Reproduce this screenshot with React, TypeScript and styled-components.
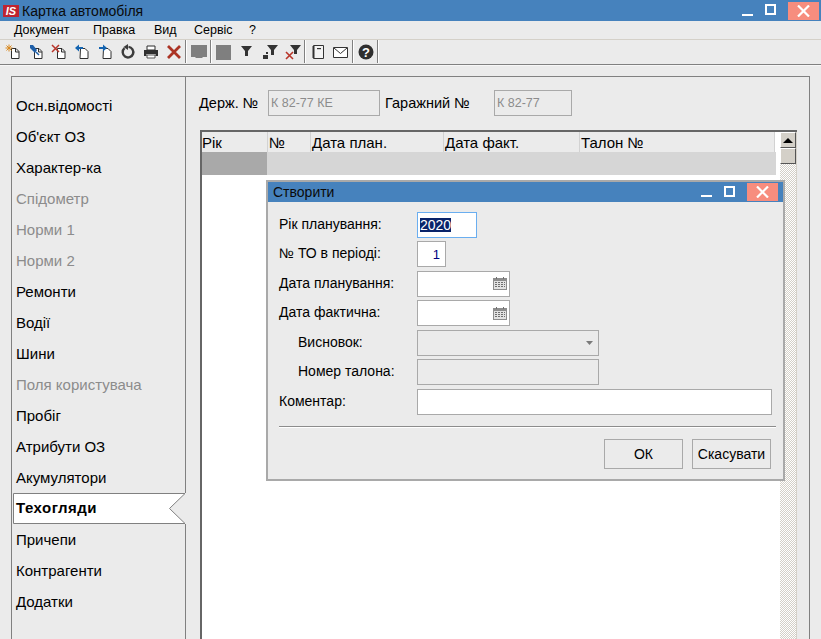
import React from "react";
import styled, { createGlobalStyle } from "styled-components";

const GlobalStyle = createGlobalStyle`
    html, body {
        margin: 0;
        padding: 0;
        background: #ebebeb;
    }
    * {
        box-sizing: border-box;
    }
`;

const menuItems = [
    { label: "Документ", width: 79 },
    { label: "Правка", width: 61 },
    { label: "Вид", width: 40 },
    { label: "Сервіс", width: 55 },
    { label: "?", width: 20 },
];

const sideItems = [
    { label: "Осн.відомості" },
    { label: "Об'єкт ОЗ" },
    { label: "Характер-ка" },
    { label: "Спідометр", off: true },
    { label: "Норми 1", off: true },
    { label: "Норми 2", off: true },
    { label: "Ремонти" },
    { label: "Водії" },
    { label: "Шини" },
    { label: "Поля користувача", off: true },
    { label: "Пробіг" },
    { label: "Атрибути ОЗ" },
    { label: "Акумулятори" },
    { label: "Техогляди", active: true },
    { label: "Причепи" },
    { label: "Контрагенти" },
    { label: "Додатки" },
];

const columns = [
    { label: "Рік", width: 66 },
    { label: "№", width: 43 },
    { label: "Дата план.", width: 133 },
    { label: "Дата факт.", width: 136 },
    { label: "Талон №", width: 195 },
];

const DocShape = () => <path d="M6.5 4.5h4.5l3 3v7h-7.5z M10.5 4.5v3.5h3.5" fill="#fff" stroke="#2f2f2f" />;

const toolIcons: Record<string, React.ReactNode> = {
    create: (
        <>
            <DocShape />
            <path d="M4 0.5v7M0.5 4h7M1.5 1.5l5 5M6.5 1.5l-5 5" stroke="#d98a22" strokeWidth="1" />
        </>
    ),
    pin: (
        <>
            <DocShape />
            <path d="M2 1l3 0 4 5 -2 3 -5 -5z" fill="#1f5fa8" />
            <path d="M8 8l3 3" stroke="#1f5fa8" strokeWidth="1.5" />
        </>
    ),
    remove: (
        <>
            <DocShape />
            <path d="M1 1l7 7M8 1l-7 7" stroke="#b8352a" strokeWidth="1.5" />
        </>
    ),
    back: (
        <>
            <path d="M6.5 4.5h4.5l3 3v7h-8z" fill="#fff" stroke="#2f2f2f" />
            <path d="M9 4H4" stroke="#1464b0" strokeWidth="2" />
            <path d="M5 0.5v7L1 4z" fill="#1464b0" />
        </>
    ),
    forward: (
        <>
            <path d="M6.5 4.5h4.5l3 3v7h-8z" fill="#fff" stroke="#2f2f2f" />
            <path d="M2 4h5" stroke="#1464b0" strokeWidth="2" />
            <path d="M6 0.5v7L10 4z" fill="#1464b0" />
        </>
    ),
    refresh: (
        <>
            <path d="M4.5 4.2a5.3 5.3 0 1 0 4 -1.3" fill="none" stroke="#3c3c3c" strokeWidth="2.4" />
            <path d="M8 0v6L3.5 3z" fill="#3c3c3c" />
        </>
    ),
    print: (
        <>
            <path d="M4 2h8v4H4z" fill="#fff" stroke="#2f2f2f" />
            <path d="M1 6h14v6h-2.5v-2h-9v2H1z" fill="#2f2f2f" />
            <path d="M4 11h8v3H4z" fill="#fff" stroke="#2f2f2f" strokeWidth="0.8" />
        </>
    ),
    close: <path d="M2 2l12 12M14 2L2 14" stroke="#ab3324" strokeWidth="2.8" />,
    monitor: <path d="M0 1h16v12h-4l-1 1H5l-1 -1H0z" fill="#7f7f7f" />,
    square: <path d="M0 1h15v15H0z" fill="#7f7f7f" />,
    filter: <path d="M2 2h11L9 7v5H6V7z" fill="#333" />,
    filterAdd: (
        <>
            <path d="M5 1h11l-4 5v5H9V6z" fill="#333" />
            <path d="M4 8h2v2H4zM1 11h5v4H1z" fill="#333" />
        </>
    ),
    filterOff: (
        <>
            <path d="M5 1h11l-4 5v4H9V6z" fill="#333" />
            <path d="M1 8l7 7M8 8l-7 7" stroke="#b8352a" strokeWidth="1.6" />
        </>
    ),
    notebook: (
        <>
            <path d="M3.5 1.5h10v13h-10z" fill="#f4f4f4" stroke="#333" />
            <path d="M2 3h3M2 5h3M2 7h3M2 9h3M2 11h3M2 13h3" stroke="#333" />
            <path d="M7 4h4v1.2H7z" fill="#333" />
        </>
    ),
    mail: (
        <>
            <path d="M0.5 3.5h14v10h-14z" fill="#fff" stroke="#333" />
            <path d="M1 4l6.5 5.5L14 4" fill="none" stroke="#333" />
        </>
    ),
    help: (
        <>
            <circle cx="8" cy="8" r="7.5" fill="#2f2f2f" />
            <text x="8" y="12.5" textAnchor="middle" fontSize="13" fontWeight="700" fontFamily="Liberation Sans, sans-serif" fill="#fff">?</text>
        </>
    ),
};

const toolbarGroups = [
    ["create", "pin", "remove", "back", "forward", "refresh", "print", "close"],
    ["monitor"],
    ["square", "filter", "filterAdd", "filterOff"],
    ["notebook", "mail"],
    ["help"],
];

const CalendarIcon = () => (
    <svg width="14" height="13" viewBox="0 0 14 13">
        <path d="M0 1h14v12H0z" fill="#8d8d8d" />
        <path d="M1 4h12v8H1z" fill="#e2e2e2" />
        <path d="M3 0h1v2H3zM10 0h1v2h-1zM2 5h2v1H2zM5 5h2v1H5zM8 5h2v1H8zM11 5h1v1h-1zM2 7h2v1H2zM5 7h2v1H5zM8 7h2v1H8zM11 7h1v1h-1zM2 9h2v1H2zM5 9h2v1H5zM8 9h2v1H8zM11 9h1v1h-1z" fill="#6f6f6f" />
    </svg>
);

const WindowControls = ({ gap }: { gap: number }) => (
    <Controls $gap={gap}>
        <MinimizeGlyph />
        <MaximizeGlyph />
        <CloseButton>
            <svg width="13" height="12" viewBox="0 0 13 12">
                <path d="M1 0.5l11 11M12 0.5l-11 11" stroke="#fff" strokeWidth="2.2" />
            </svg>
        </CloseButton>
    </Controls>
);

const App = () => {
    return (
        <Page>
            <GlobalStyle />
            <TitleBar>
                <Logo>IS</Logo>
                <TitleText>Картка автомобіля</TitleText>
                <WindowControls gap={2} />
            </TitleBar>

            <MenuBar>
                {menuItems.map(item => (
                    <MenuItem key={item.label} $width={item.width}>{item.label}</MenuItem>
                ))}
            </MenuBar>

            <ToolBar>
                {toolbarGroups.map((group, i) => (
                    <React.Fragment key={i}>
                        {group.map(name => (
                            <ToolButton key={name}>
                                <svg width="16" height="16" viewBox="0 0 16 16">{toolIcons[name]}</svg>
                            </ToolButton>
                        ))}
                        <ToolSeparator />
                    </React.Fragment>
                ))}
            </ToolBar>

            <Workspace>
                <Frame>
                    <SideBar>
                        {sideItems.map(item =>
                            item.active ? (
                                <ActiveTab key={item.label}>
                                    <TabShape width="173" height="31" viewBox="0 0 173 31">
                                        <rect x="155" y="0" width="18" height="31" fill="#ebebeb" />
                                        <path d="M0.5 0.5H172L156.5 15.5L172 30.5H0.5z" fill="#fff" stroke="#808080" />
                                    </TabShape>
                                    <ActiveLabel>{item.label}</ActiveLabel>
                                </ActiveTab>
                            ) : (
                                <SideItem key={item.label} $off={item.off}>{item.label}</SideItem>
                            )
                        )}
                    </SideBar>

                    <Content>
                        <FieldsRow>
                            <FieldLabel $width={69}>Держ. №</FieldLabel>
                            <ReadonlyField $width={112}>К 82-77 КЕ</ReadonlyField>
                            <FieldLabel $width={114} $indent={5}>Гаражний №</FieldLabel>
                            <ReadonlyField $width={78}>К 82-77</ReadonlyField>
                        </FieldsRow>

                        <TableBox>
                            <TableMain>
                                <HeaderRow>
                                    {columns.map(col => (
                                        <HeaderCell key={col.label} $width={col.width}>{col.label}</HeaderCell>
                                    ))}
                                </HeaderRow>
                                <DataRow>
                                    <CurrentCell />
                                </DataRow>
                            </TableMain>
                            <ScrollBar>
                                <ScrollButton>
                                    <svg width="10" height="5" viewBox="0 0 10 5">
                                        <path d="M5 0l5 5H0z" fill="#000" />
                                    </svg>
                                </ScrollButton>
                                <ScrollThumb />
                                <ScrollTrack />
                            </ScrollBar>
                        </TableBox>
                    </Content>
                </Frame>
            </Workspace>

            <Dialog>
                <DialogTitle>
                    <DialogTitleText>Створити</DialogTitleText>
                    <WindowControls gap={5} />
                </DialogTitle>
                <DialogBody>
                    <FormRow>
                        <FormLabel>Рік планування:</FormLabel>
                        <Input $width={60} $focus>
                            <Selected>2020</Selected>
                        </Input>
                    </FormRow>
                    <FormRow>
                        <FormLabel>№ ТО в періоді:</FormLabel>
                        <Input $width={29} $align="right">
                            <NumberValue>1</NumberValue>
                        </Input>
                    </FormRow>
                    <FormRow>
                        <FormLabel>Дата планування:</FormLabel>
                        <Input $width={93} $align="right"><CalendarIcon /></Input>
                    </FormRow>
                    <FormRow>
                        <FormLabel>Дата фактична:</FormLabel>
                        <Input $width={93} $align="right"><CalendarIcon /></Input>
                    </FormRow>
                    <FormRow>
                        <FormLabel $indent>Висновок:</FormLabel>
                        <Input $width={182} $align="right" $disabled>
                            <svg width="18" height="4" viewBox="0 0 18 4">
                                <path d="M8 0h7l-3.5 4z" fill="#7a7a7a" />
                            </svg>
                        </Input>
                    </FormRow>
                    <FormRow>
                        <FormLabel $indent>Номер талона:</FormLabel>
                        <Input $width={182} $disabled />
                    </FormRow>
                    <FormRow>
                        <FormLabel>Коментар:</FormLabel>
                        <Input $width={355} />
                    </FormRow>
                    <Divider />
                    <ButtonRow>
                        <DialogButton>ОК</DialogButton>
                        <DialogButton>Скасувати</DialogButton>
                    </ButtonRow>
                </DialogBody>
            </Dialog>
        </Page>
    );
};

const Page = styled.div`
    position: relative;
    width: 821px;
    height: 639px;
    overflow: hidden;
    display: flex;
    flex-direction: column;
    background: #ebebeb;
    color: #000;
    font-family: "Liberation Sans", Arial, sans-serif;
    font-size: 14px;
`;

const TitleBar = styled.div`
    height: 21px;
    flex: none;
    display: flex;
    align-items: center;
    background: #4682bd;
    padding-left: 3px;
`;

const Logo = styled.span`
    width: 16px;
    height: 12px;
    margin-top: 1px;
    background: #bf2430;
    color: #fff;
    font-size: 11px;
    line-height: 12px;
    font-weight: 700;
    font-style: italic;
    text-align: center;
`;

const TitleText = styled.span`
    flex: 1;
    margin-left: 3px;
    font-size: 14px;
    color: #0a0a0a;
`;

const Controls = styled.div<{ $gap: number }>`
    display: flex;
    align-items: center;
    gap: 12px;
    padding-right: ${props => props.$gap}px;
`;

const MinimizeGlyph = styled.span`
    width: 11px;
    height: 2px;
    margin-top: 8px;
    background: #fff;
`;

const MaximizeGlyph = styled.span`
    width: 11px;
    height: 11px;
    margin-top: -2px;
    border: 2px solid #fff;
`;

const CloseButton = styled.span`
    width: 31px;
    height: 18px;
    display: flex;
    align-items: center;
    justify-content: center;
    background: #f78d7e;
`;

const MenuBar = styled.div`
    height: 19px;
    flex: none;
    display: flex;
    align-items: center;
    padding-left: 14px;
    border-bottom: 1px solid #d4d0c8;
    font-size: 12.5px;
`;

const MenuItem = styled.span<{ $width: number }>`
    width: ${props => props.$width}px;
    flex: none;
`;

const ToolBar = styled.div`
    height: 25px;
    flex: none;
    display: flex;
    align-items: center;
    padding: 0 0 1px 1px;
    border-bottom: 1px solid #808080;
    box-shadow: 0 1px 0 #f7f7f7;
`;

const ToolButton = styled.span`
    width: 23px;
    height: 23px;
    flex: none;
    display: flex;
    align-items: center;
    justify-content: center;
`;

const ToolSeparator = styled.span`
    width: 2px;
    height: 23px;
    flex: none;
    border-left: 1px solid #808080;
    border-right: 1px solid #fff;
`;

const Workspace = styled.div`
    flex: 1;
    min-height: 0;
    display: flex;
    padding: 11px 11px 0;
`;

const Frame = styled.div`
    flex: 1;
    display: flex;
    border: 1px solid #808080;
    border-bottom: none;
`;

const SideBar = styled.div`
    width: 174px;
    flex: none;
    padding-top: 14px;
    border-right: 1px solid #808080;
    font-size: 15px;
`;

const SideItem = styled.div<{ $off?: boolean }>`
    height: 31px;
    line-height: 30px;
    padding-left: 4px;
    color: ${props => (props.$off ? "#8c8c8c" : "#000")};
`;

const ActiveTab = styled.div`
    position: relative;
    height: 31px;
    margin: -1px -1px 1px 1px;
`;

const TabShape = styled.svg`
    position: absolute;
    left: 0;
    top: 0;
`;

const ActiveLabel = styled.span`
    position: relative;
    display: block;
    padding-left: 3px;
    line-height: 30px;
    font-weight: 700;
    letter-spacing: 0.5px;
`;

const Content = styled.div`
    flex: 1;
    min-width: 0;
    display: flex;
    flex-direction: column;
    padding: 13px 12px 0 13px;
`;

const FieldsRow = styled.div`
    display: flex;
    align-items: center;
    height: 26px;
    flex: none;
    font-size: 14.5px;
`;

const FieldLabel = styled.span<{ $width: number; $indent?: number }>`
    width: ${props => props.$width}px;
    padding-left: ${props => props.$indent || 0}px;
    flex: none;
`;

const ReadonlyField = styled.span<{ $width: number }>`
    width: ${props => props.$width}px;
    height: 26px;
    flex: none;
    padding-left: 2px;
    line-height: 24px;
    font-size: 12.5px;
    color: #8c8c8c;
    border: 1px solid #a9a9a9;
`;

const TableBox = styled.div`
    flex: 1;
    min-height: 0;
    margin: 14px 0 0 1px;
    display: flex;
    border-top: 2px solid #666;
    border-left: 2px solid #666;
`;

const TableMain = styled.div`
    flex: 1;
    min-width: 0;
    background: #fff;
`;

const HeaderRow = styled.div`
    display: flex;
    width: 573px;
    height: 20px;
    background: #ebebeb;
    font-size: 15px;
`;

const HeaderCell = styled.div<{ $width: number }>`
    width: ${props => props.$width}px;
    flex: none;
    padding-left: 1px;
    line-height: 21px;
    border-right: 1px solid #d2d2d2;
    &:first-child {
        padding-left: 0;
    }
`;

const DataRow = styled.div`
    width: 574px;
    height: 23px;
    background: #d6d6d6;
`;

const CurrentCell = styled.div`
    width: 65px;
    height: 100%;
    background: #a9a9a9;
`;

const ScrollBar = styled.div`
    width: 17px;
    flex: none;
    display: flex;
    flex-direction: column;
    border-right: 1px solid #d4d0c8;
`;

const ScrollButton = styled.div`
    height: 16px;
    flex: none;
    display: flex;
    align-items: center;
    justify-content: center;
    background: #d4d0c8;
    border: 1px solid;
    border-color: #fff #555 #555 #fff;
`;

const ScrollThumb = styled.div`
    height: 16px;
    flex: none;
    background: #d4d0c8;
    border: 1px solid;
    border-color: #fff #555 #555 #fff;
`;

const ScrollTrack = styled.div`
    flex: 1;
    background: repeating-conic-gradient(#d4d0c8 0 25%, #fff 0 50%) 0 0 / 2px 2px;
`;

const Dialog = styled.div`
    position: absolute;
    left: 266px;
    top: 180px;
    width: 519px;
    height: 301px;
    display: flex;
    flex-direction: column;
    background: #ebebeb;
    border: 2px solid #a9a9a9;
`;

const DialogTitle = styled.div`
    height: 20px;
    flex: none;
    display: flex;
    align-items: center;
    background: #4682bd;
    padding-left: 5px;
`;

const DialogTitleText = styled.span`
    flex: 1;
    font-size: 14px;
    color: #0a0a0a;
`;

const DialogBody = styled.div`
    flex: 1;
    display: flex;
    flex-direction: column;
    gap: 3.5px;
    padding: 9.9px 11px 0 11px;
`;

const FormRow = styled.div`
    display: flex;
    align-items: center;
    height: 26px;
    flex: none;
`;

const FormLabel = styled.span<{ $indent?: boolean }>`
    width: 138px;
    flex: none;
    padding-left: ${props => (props.$indent ? 19 : 0)}px;
    margin-top: -2px;
`;

const Input = styled.div<{ $width: number; $focus?: boolean; $disabled?: boolean; $align?: string }>`
    width: ${props => props.$width}px;
    height: 26px;
    flex: none;
    display: flex;
    align-items: center;
    justify-content: ${props => (props.$align === "right" ? "flex-end" : "flex-start")};
    padding: 0 2px;
    background: ${props => (props.$disabled ? "#ebebeb" : "#fff")};
    border: 1px solid ${props => (props.$focus ? "#6aaef0" : "#a9a9a9")};
`;

const Selected = styled.span`
    background: #0a246a;
    color: #fff;
    height: 14px;
    line-height: 14px;
    font-size: 14px;
`;

const NumberValue = styled.span`
    color: #00007f;
    font-size: 13px;
    padding-right: 3px;
`;

const Divider = styled.div`
    height: 2px;
    flex: none;
    margin: 7.5px -4px 0 0;
    border-top: 1px solid #8c8c8c;
    border-bottom: 1px solid #fff;
`;

const ButtonRow = styled.div`
    display: flex;
    justify-content: flex-end;
    gap: 9px;
    margin: 7.5px 1px 0 0;
`;

const DialogButton = styled.div`
    width: 79px;
    height: 30px;
    line-height: 28px;
    text-align: center;
    border: 1px solid #a9a9a9;
`;

export default App;
